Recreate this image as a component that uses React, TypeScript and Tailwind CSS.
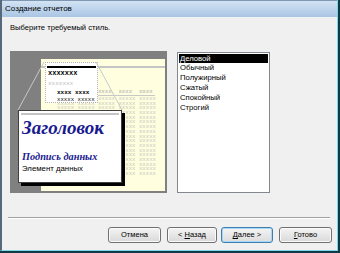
const rows = Array.from({ length: 17 }, (_, i) => i);

function Btn({ children, primary = false, className = "" }: { children: React.ReactNode; primary?: boolean; className?: string }) {
  return (
    <button
      type="button"
      className={
        "flex h-[16px] items-center justify-center rounded-[3px] border text-[7.5px] leading-none text-black " +
        (primary
          ? "border-[#3c7fb1] bg-gradient-to-b from-[#f4f4f4] to-[#dcdcdc] shadow-[inset_0_0_0_1px_#a8d8f5] "
          : "border-[#707070] bg-gradient-to-b from-[#f4f4f4] to-[#d9d9d9] shadow-[inset_0_0_0_1px_#fbfbfb] ") +
        className
      }
    >
      <span className="whitespace-pre">{children}</span>
    </button>
  );
}

export default function App() {
  return (
    <div className="h-[253px] w-[340px] overflow-hidden bg-[#0e3c46] pr-[2px] pb-[2px] font-['Liberation_Sans',Arial,sans-serif]">
      <div className="flex h-full flex-col border-r border-b border-l-2 border-r-[#7fd4e6] border-b-[#7fd4e6] border-l-[#56687a]">
        {/* title bar */}
        <div className="h-[17px] shrink-0 border-t border-[#7f97b0] bg-gradient-to-b from-[#d3e3f3] to-[#a9c5e4] pl-[3px] text-[8px] leading-[15px] text-black">
          Создание отчетов
        </div>

        <div className="flex flex-1 flex-col bg-[#f0f0f0] pl-[8px]">
          <p className="mt-[5px] h-[11px] text-[7.6px] leading-[11px] text-black">Выберите требуемый стиль.</p>

          <div className="mt-[18px] flex gap-[10px]">
            {/* preview */}
            <div className="relative h-[142px] w-[157px] bg-[#808080] pt-[8px] pr-[2px] pb-[2px] pl-[31px]">
              <div className="relative h-[132px] w-[124px] bg-[#ffffe0]">
                <div className="absolute top-[7px] right-0 left-0 h-[2px] bg-[#c4c4c4]" />
                <div className="absolute top-[30px] left-[16px] font-['Liberation_Mono',monospace] text-[5.7px] text-[#c4c4bc]">
                  <div className="h-[5px] leading-[5px] whitespace-pre font-bold">xxxx  xxxx  xxxx  xxxx  xxxx</div>
                  <div className="mt-[1px] mb-[1px] h-px w-[98px] bg-[#c8c8c8]" />
                  {rows.map((r) => (
                    <div key={r} className="h-[4.7px] leading-[4.7px] whitespace-pre">
                      xxxxx xxxxx xxxxx xxxxx xxxxx
                    </div>
                  ))}
                </div>
              </div>

              {/* magnified region */}
              <div className="absolute top-[11px] left-[35px] h-[41px] w-[53px] border border-dotted border-[#b4b4b4] bg-white">
                <div className="mx-[1px] mt-[3px] h-[2px] bg-black" />
                <div className="mt-[1px] pl-[2px] font-['Liberation_Mono',monospace] text-[7px] leading-[8px] font-bold text-black">xxxxxxx</div>
                <div className="mt-[3px] pl-[2px] font-['Liberation_Mono',monospace] text-[6px] leading-[7px] text-[#b8b8b8]">xxxxxxx</div>
                <div className="mt-[2px] pl-[11px] font-['Liberation_Mono',monospace] text-[6px] leading-[7px] whitespace-pre font-bold text-black">xxxx xxxx</div>
                <div className="mt-[1px] pl-[11px] font-['Liberation_Mono',monospace] text-[5.7px] leading-[6px] whitespace-pre text-black">xxxxx xxxxx</div>
              </div>

              <svg className="absolute inset-0" width="157" height="142">
                <line x1="34" y1="11" x2="8" y2="59" stroke="#c8c8c8" strokeWidth="1" />
                <line x1="86" y1="11" x2="112" y2="59" stroke="#c8c8c8" strokeWidth="1" />
              </svg>

              {/* zoomed card */}
              <div className="absolute top-[59px] left-[8px] h-[73px] w-[104px] border border-[#404040] bg-white shadow-[3px_3px_0_#000]">
                <div className="mx-[2px] mt-[2px] h-[2px] bg-[#c4c4c4]" />
                <div className="mt-[2px] pl-[3px] font-['Liberation_Serif',serif] text-[19px] leading-[22px] font-bold italic text-[#1a1a90]">Заголовок</div>
                <div className="mt-[11px] pl-[3px] font-['Liberation_Serif',serif] text-[10.3px] leading-[13px] font-bold italic text-[#1a1a90]">Подпись данных</div>
                <div className="mt-[1px] pl-[3px] text-[7.8px] leading-[10px] text-black">Элемент данных</div>
              </div>
            </div>

            {/* style list */}
            <div className="mt-[1px] h-[141px] w-[93px] border border-[#828790] bg-white p-px text-[7.7px] leading-[10px] text-black">
              <div className="h-[9px] bg-black pl-px leading-[9px] text-white">Деловой</div>
              <div className="pl-px">Обычный</div>
              <div className="pl-px">Полужирный</div>
              <div className="pl-px">Сжатый</div>
              <div className="pl-px">Спокойный</div>
              <div className="pl-px">Строгий</div>
            </div>
          </div>

          <div className="mt-[24px] mr-[7px] -ml-[2px] h-[2px] border-t border-b border-t-[#a0a0a0] border-b-white" />

          <div className="mt-[8px] flex">
            <Btn className="ml-[98px] w-[53px]">Отмена</Btn>
            <Btn className="ml-[6px] w-[50px]">
              {"< "}<span className="underline">Н</span>азад
            </Btn>
            <Btn primary className="ml-[4px] w-[52px]">
              <span className="underline">Д</span>алее{" >"}
            </Btn>
            <Btn className="ml-[6px] w-[53px]">
              <span className="underline">Г</span>отово
            </Btn>
          </div>
        </div>
      </div>
    </div>
  );
}
